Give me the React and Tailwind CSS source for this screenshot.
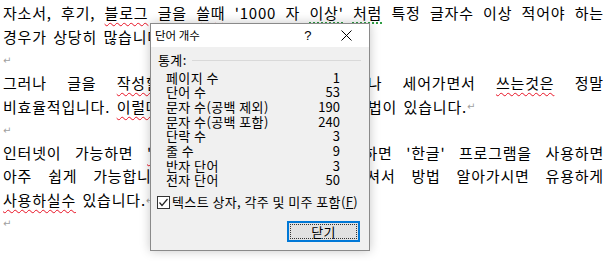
import React from "react";

const R = ({ children }) => (
  <span className="underline decoration-wavy decoration-[#e81123] decoration-1 underline-offset-[3px]">
    {children}
  </span>
);

const G = ({ children }) => (
  <span className="underline decoration-dotted decoration-[#2f9e44] decoration-2 underline-offset-[3px]">
    {children}
  </span>
);

const Mark = () => (
  <span className="text-[#a0a0a0] text-[10px] tracking-normal font-['DejaVu_Sans']">↵</span>
);

function Justified({ words }) {
  return (
    <div className="flex justify-between h-[23.3px] items-center">
      {words.map((w, i) => (
        <span key={i}>{w}</span>
      ))}
    </div>
  );
}

function Plain({ children }) {
  return (
    <div className="h-[23.3px] flex items-center whitespace-pre [word-spacing:2.3px]">{children}</div>
  );
}

const stats = [
  ["페이지 수", "1"],
  ["단어 수", "53"],
  ["문자 수(공백 제외)", "190"],
  ["문자 수(공백 포함)", "240"],
  ["단락 수", "3"],
  ["줄 수", "9"],
  ["반자 단어", "3"],
  ["전자 단어", "50"],
];

function WordCountDialog() {
  return (
    <div className="absolute left-[150px] top-[23px] w-[220px] h-[228px] border border-[#8a8a8a] bg-[#f0f0f0] shadow-[0_0_10px_rgba(0,0,0,0.22)] flex flex-col text-[13px] tracking-[0.4px] text-black font-['Noto_Sans_CJK_KR',sans-serif]">
      <div className="h-[23px] bg-white flex items-center shrink-0">
        <span className="pl-[4px] text-[11.5px] tracking-normal">단어 개수</span>
        <span className="ml-auto w-[30px] text-center text-[13px] font-['Liberation_Sans']">?</span>
        <span className="w-[46px] flex items-center justify-center">
          <svg width="11" height="11" viewBox="0 0 11 11">
            <path d="M0.5 0.5 L10.5 10.5 M10.5 0.5 L0.5 10.5" stroke="#000" strokeWidth="1" />
          </svg>
        </span>
      </div>
      <div className="flex flex-col pt-[5px]">
        <div className="flex items-center h-[16px] pl-[7px] pr-[8px]">
          <span>통계:</span>
          <span className="flex-1 h-px bg-[#d9d9d9] ml-[5px]" />
        </div>
        <div className="mt-[2.6px] w-[189px] pl-[15px]">
          {stats.map(([label, value]) => (
            <div key={label} className="flex justify-between h-[14.7px] leading-[14.7px]">
              <span>{label}</span>
              <span className="tracking-normal">{value}</span>
            </div>
          ))}
        </div>
        <div className="mt-[6px] h-[16px] flex items-center pl-[6px]">
          <span className="w-[13px] h-[13px] shrink-0 bg-white border border-[#333] flex items-center justify-center">
            <svg width="11" height="11" viewBox="0 0 11 11">
              <path d="M1.5 5.5 L4 8.5 L9.5 2" stroke="#222" strokeWidth="1.2" fill="none" />
            </svg>
          </span>
          <span className="ml-[2px] whitespace-nowrap">
            텍스트 상자, 각주 및 미주 포함(<span className="underline">F</span>)
          </span>
        </div>
        <div className="mt-[11px] flex justify-end pr-[9px]">
          <div className="w-[73px] h-[21px] border-2 border-[#0078d7] bg-[#e1e1e1] p-[1px]">
            <div className="w-full h-full border border-dotted border-[#333] flex items-center justify-center leading-none">
              닫기
            </div>
          </div>
        </div>
      </div>
    </div>
  );
}

export default function App() {
  return (
    <div className="relative w-[613px] h-[261px] bg-white overflow-hidden">
      <div className="pt-[2px] pl-[3px] w-[604px] text-[15px] tracking-[0.8px] text-black font-['Noto_Sans_CJK_KR',sans-serif]">
        <Justified
          words={[
            "자소서,",
            "후기,",
            <R>블로그</R>,
            "글을",
            <R>쓸때</R>,
            "'1000",
            "자",
            <G>이상'</G>,
            <G>처럼</G>,
            "특정",
            "글자수",
            "이상",
            "적어야",
            "하는",
          ]}
        />
        <Plain>
          경우가 상당히 많습니다.
          <Mark />
        </Plain>
        <Plain>
          <Mark />
        </Plain>
        <Justified
          words={[
            "그러나",
            "글을",
            <R>작성할</R>,
            "때마다",
            "글자수를",
            "하나하나",
            "세어가면서",
            <R>쓰는것은</R>,
            "정말",
          ]}
        />
        <Plain>
          비효율적입니다. <R>이럴때</R> 글자수를 쉽게 세는 간단한 방법이 있습니다.
          <Mark />
        </Plain>
        <Plain>
          <Mark />
        </Plain>
        <Justified
          words={[
            "인터넷이",
            "가능하면",
            <R>'글자수</R>,
            "세기'를",
            "쓰고,",
            "불가능하면",
            "'한글'",
            "프로그램을",
            "사용하면",
          ]}
        />
        <Justified
          words={["아주", "쉽게", "가능합니다.", "아래의", "글을", "잘", "참고하셔서", "방법", "알아가시면", "유용하게"]}
        />
        <Plain>
          <R>사용하실수</R> 있습니다.
          <Mark />
        </Plain>
        <Plain>
          <Mark />
        </Plain>
      </div>
      <WordCountDialog />
    </div>
  );
}
